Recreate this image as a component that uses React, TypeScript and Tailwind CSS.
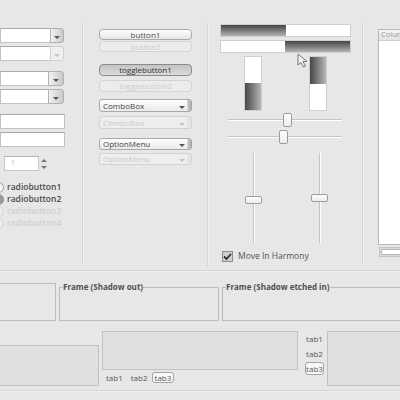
import React from "react";

function Arrow({ dim }: { dim?: boolean }) {
  return (
    <div
      className={
        dim
          ? "w-0 h-0 border-x-[3px] border-x-transparent border-t-[3px] border-t-[#c4c4c4]"
          : "w-0 h-0 border-x-[3px] border-x-transparent border-t-[3px] border-t-[#555555]"
      }
    />
  );
}

function ComboEntry({ wide, disabled }: { wide?: boolean; disabled?: boolean }) {
  return (
    <div className="flex h-[15px]">
      <div
        className={
          wide
            ? "w-[50px] bg-white border border-[#c2c2c2] border-t-[#a9a9a9] border-r-0"
            : "w-[48px] bg-white border border-[#c2c2c2] border-t-[#a9a9a9] border-r-0"
        }
      />
      <div
        className={
          (wide ? "w-[14px] " : "w-[16px] ") +
          (disabled
            ? "flex items-center justify-center rounded-r-[3px] border border-[#d0d0d0] bg-[#f0f0f0]"
            : "flex items-center justify-center rounded-r-[3px] border border-[#b0b0b0] bg-linear-to-r from-[#f2f2f2] to-[#c9c9c9]")
        }
      >
        <div className="mt-[3px]">
          <Arrow dim={disabled} />
        </div>
      </div>
    </div>
  );
}

function PushButton({
  label,
  disabled,
  pressed,
  h,
}: {
  label: string;
  disabled?: boolean;
  pressed?: boolean;
  h: string;
}) {
  let cls =
    "w-[93px] flex items-center justify-center rounded-[4px] border text-[8px] leading-none ";
  if (pressed) cls += "border-[#8a8a8a] bg-linear-to-b from-[#c4c4c4] to-[#dadada] text-[#333]";
  else if (disabled) cls += "border-[#d4d4d4] bg-[#ececec] text-[#cdcdcd]";
  else cls += "border-[#a9a9a9] bg-linear-to-b from-white to-[#e6e6e6] text-[#555]";
  return <div className={cls + " " + h}>{label}</div>;
}

function MenuButton({ label, disabled, h }: { label: string; disabled?: boolean; h: string }) {
  return (
    <div
      className={
        h +
        (disabled
          ? " w-[93px] flex rounded-[3px] border border-[#d2d2d2] bg-[#eeeeee] text-[#c9c9c9]"
          : " w-[93px] flex rounded-[3px] border border-[#a9a9a9] bg-linear-to-b from-white to-[#e9e9e9] text-[#444]")
      }
    >
      <div className="flex-1 flex items-center pl-[3px] text-[8px] leading-none">{label}</div>
      <div className="w-[10px] flex items-end justify-center pb-[2px]">
        <Arrow dim={disabled} />
      </div>
      <div
        className={
          disabled
            ? "w-[4px] rounded-r-[2px] bg-[#e4e4e4]"
            : "w-[4px] rounded-r-[2px] bg-linear-to-r from-[#d8d8d8] to-[#a8a8a8]"
        }
      />
    </div>
  );
}

function Radio({ label, state }: { label: string; state: "on" | "off" | "dis" }) {
  return (
    <div className="flex items-center h-[12px]">
      <div
        className={
          state === "dis"
            ? "-ml-[7px] shrink-0 w-[11px] h-[11px] rounded-full border border-[#d2d2d2] bg-[#ececec]"
            : state === "on"
            ? "-ml-[7px] shrink-0 w-[11px] h-[11px] rounded-full border border-[#8e8e8e] bg-[#9a9a9a]"
            : "-ml-[7px] shrink-0 w-[11px] h-[11px] rounded-full border border-[#9a9a9a] bg-[#f4f4f4]"
        }
      />
      <span
        className={
          state === "dis"
            ? "ml-[3px] text-[8.5px] font-semibold text-[#d0d0d0] leading-none whitespace-nowrap"
            : "ml-[3px] text-[8.5px] font-semibold text-[#4a4a4a] leading-none whitespace-nowrap"
        }
      >
        {label}
      </span>
    </div>
  );
}

function HScale({ thumb }: { thumb: string }) {
  return (
    <div className="relative h-[14px] ml-[8px] w-[114px] flex items-center">
      <div className="w-full h-[2px] bg-[#c4c4c4] border-b border-white" />
      <div
        className={
          "absolute top-0 w-[9px] h-[14px] rounded-[2px] border border-[#9c9c9c] bg-linear-to-b from-white to-[#ececec] " +
          thumb
        }
      />
    </div>
  );
}

function VScale({ thumb }: { thumb: string }) {
  return (
    <div className="relative w-[17px] h-[90px] flex justify-center">
      <div className="w-[2px] h-full bg-[#c4c4c4] border-r border-white" />
      <div
        className={
          "absolute left-0 w-[17px] h-[8px] rounded-[2px] border border-[#9c9c9c] bg-linear-to-b from-white to-[#ececec] " +
          thumb
        }
      />
    </div>
  );
}

function Sep() {
  return <div className="shrink-0 w-[2px] mt-[23px] mb-[4px] bg-[#d4d4d4] border-r border-[#efefef]" />;
}

export default function App() {
  return (
    <div className="w-[400px] h-[400px] overflow-hidden bg-[#e7e7e7] text-[#4d4d4d] font-['Open_Sans',sans-serif]">
      <div className="flex h-[270px]">
        {/* left column */}
        <div className="shrink-0 w-[82px] pt-[28px] flex flex-col">
          <ComboEntry wide />
          <div className="mt-[3px]">
            <ComboEntry wide disabled />
          </div>
          <div className="mt-[10px]">
            <ComboEntry />
          </div>
          <div className="mt-[3px]">
            <ComboEntry />
          </div>
          <div className="mt-[10px] w-[65px] h-[15px] bg-white border border-[#c2c2c2] border-t-[#a9a9a9]" />
          <div className="mt-[3px] w-[65px] h-[15px] bg-white border border-[#c2c2c2] border-t-[#a9a9a9]" />
          <div className="mt-[9px] ml-[4px] flex items-center">
            <div className="w-[35px] h-[15px] bg-white border border-[#c8c8c8] border-t-[#b0b0b0] flex items-center pl-[6px] text-[7px] text-[#b4b4b4]">
              1
            </div>
            <div className="ml-[2px] flex flex-col gap-[4px]">
              <div className="w-0 h-0 border-x-[3px] border-x-transparent border-b-[3px] border-b-[#777]" />
              <div className="w-0 h-0 border-x-[3px] border-x-transparent border-t-[3px] border-t-[#777]" />
            </div>
          </div>
          <div className="mt-[10px] flex flex-col">
            <Radio label="radiobutton1" state="off" />
            <Radio label="radiobutton2" state="on" />
            <Radio label="radiobutton3" state="dis" />
            <Radio label="radiobutton4" state="dis" />
          </div>
        </div>
        <Sep />
        {/* middle column */}
        <div className="shrink-0 w-[123px] pl-[15px] pt-[29px] flex flex-col">
          <PushButton label="button1" h="h-[11px]" />
          <div className="mt-[1px]">
            <PushButton label="button2" h="h-[11px]" disabled />
          </div>
          <div className="mt-[12px]">
            <PushButton label="togglebutton1" h="h-[12px]" pressed />
          </div>
          <div className="mt-[4px]">
            <PushButton label="togglebutton2" h="h-[12px]" disabled />
          </div>
          <div className="mt-[7px]">
            <MenuButton label="ComboBox" h="h-[13px]" />
          </div>
          <div className="mt-[4px]">
            <MenuButton label="ComboBox" h="h-[13px]" disabled />
          </div>
          <div className="mt-[9px]">
            <MenuButton label="OptionMenu" h="h-[12px]" />
          </div>
          <div className="mt-[3px]">
            <MenuButton label="OptionMenu" h="h-[12px]" disabled />
          </div>
        </div>
        <Sep />
        {/* right column */}
        <div className="relative shrink-0 w-[153px] pl-[11px] pt-[24px] flex flex-col">
          <div className="w-[131px] h-[13px] flex border border-[#cfcfcf] bg-white">
            <div className="w-[65px] bg-linear-to-b from-[#474747] to-[#b4b4b4]" />
          </div>
          <div className="mt-[3px] w-[131px] h-[13px] flex justify-end border border-[#cfcfcf] bg-white">
            <div className="w-[65px] bg-linear-to-b from-[#474747] to-[#b4b4b4]" />
          </div>
          <div className="mt-[3px] flex h-[55px]">
            <div className="ml-[24px] w-[18px] h-full flex flex-col justify-end border border-[#cfcfcf] bg-white">
              <div className="h-[27px] bg-linear-to-r from-[#474747] to-[#b8b8b8]" />
            </div>
            <div className="ml-[47px] w-[18px] h-full flex flex-col border border-[#cfcfcf] bg-white">
              <div className="h-[27px] bg-linear-to-r from-[#474747] to-[#b8b8b8]" />
            </div>
          </div>
          <div className="mt-[2px]">
            <HScale thumb="left-[55px]" />
          </div>
          <div className="mt-[3px]">
            <HScale thumb="left-[51px]" />
          </div>
          <div className="mt-[9px] flex">
            <div className="ml-[25px]">
              <VScale thumb="top-[43px]" />
            </div>
            <div className="ml-[49px]">
              <VScale thumb="top-[41px]" />
            </div>
          </div>
          <div className="mt-[8px] flex items-center h-[11px]">
            <div className="ml-[2px] w-[11px] h-[11px] border border-[#8c8c8c] bg-[#cfcfcf] flex items-center justify-center">
              <svg width="9" height="9" viewBox="0 0 9 9">
                <path d="M1 4.5 L3.5 7 L8 2" stroke="#2e2e2e" strokeWidth="1.8" fill="none" />
              </svg>
            </div>
            <span className="ml-[5px] text-[8.5px] leading-none text-[#555]">Move In Harmony</span>
          </div>
          <svg className="absolute left-[88px] top-[53px]" width="12" height="15" viewBox="0 0 12 15">
            <path d="M1 1 L1 12 L4 9.5 L6.5 14 L8.5 13 L6 8.5 L10 8.5 Z" fill="#f4f4f4" stroke="#777" strokeWidth="1" />
          </svg>
        </div>
        <Sep />
        {/* tree view */}
        <div className="shrink-0 w-[60px] pl-[14px] pt-[29px] flex flex-col">
          <div className="h-[216px] w-[40px] flex flex-col border border-[#b8b8b8] bg-white">
            <div className="h-[11px] flex items-center pl-[2px] bg-linear-to-b from-[#f6f6f6] to-[#e2e2e2] border-b border-[#cfcfcf] text-[7.5px] leading-none text-[#9a9a9a]">
              Column
            </div>
          </div>
          <div className="mt-[2px] ml-[1px] w-[40px] h-[10px] flex border border-[#c4c4c4] bg-[#dadada] p-[1px]">
            <div className="flex-1 rounded-[2px] border border-[#b4b4b4] bg-white" />
          </div>
        </div>
      </div>
      <div className="h-[2px] bg-[#d4d4d4] border-b border-[#f0f0f0]" />
      {/* frames */}
      <div className="mt-[11px] flex gap-[3px] h-[38px]">
        <fieldset className="shrink-0 -ml-px w-[57px] border border-[#bcbcbc]">
          <legend className="text-[8px] leading-none"></legend>
        </fieldset>
        <fieldset className="shrink-0 w-[160px] border border-[#bcbcbc]">
          <legend className="ml-[3px] text-[8px] font-bold leading-none text-[#505050]">Frame (Shadow out)</legend>
        </fieldset>
        <fieldset className="shrink-0 w-[190px] border border-[#bcbcbc]">
          <legend className="ml-[3px] text-[8px] font-bold leading-none text-[#505050]">Frame (Shadow etched in)</legend>
        </fieldset>
      </div>
      {/* notebooks */}
      <div className="mt-[10px] flex h-[55px]">
        <div className="shrink-0 -ml-px mt-[14px] w-[100px] h-[41px] border border-[#c2c2c2] bg-[#e0e0e0]" />
        <div className="shrink-0 ml-[3px] w-[196px] flex flex-col">
          <div className="h-[39px] border border-[#c2c2c2] bg-[#e0e0e0]" />
          <div className="mt-[2px] flex items-center text-[8px] leading-none text-[#555]">
            <span className="ml-[4px]">tab1</span>
            <span className="ml-[8px]">tab2</span>
            <span className="ml-[4px] h-[11px] px-[2px] flex items-center rounded-[3px] border border-[#a4a4a4] bg-[#f8f8f8]">tab3</span>
          </div>
        </div>
        <div className="shrink-0 ml-[7px] w-[19px] flex flex-col items-center text-[8px] leading-none text-[#555]">
          <span className="mt-[4px]">tab1</span>
          <span className="mt-[7px]">tab2</span>
          <span className="mt-[4px] w-[19px] h-[13px] flex items-center justify-center rounded-[3px] border border-[#a4a4a4] bg-[#f8f8f8]">
            tab3
          </span>
        </div>
        <div className="shrink-0 ml-[3px] w-[80px] h-[55px] border border-[#c2c2c2] bg-[#e0e0e0]" />
      </div>
      <div className="mt-[4px] h-[2px] bg-[#d4d4d4] border-b border-[#f0f0f0]" />
    </div>
  );
}
